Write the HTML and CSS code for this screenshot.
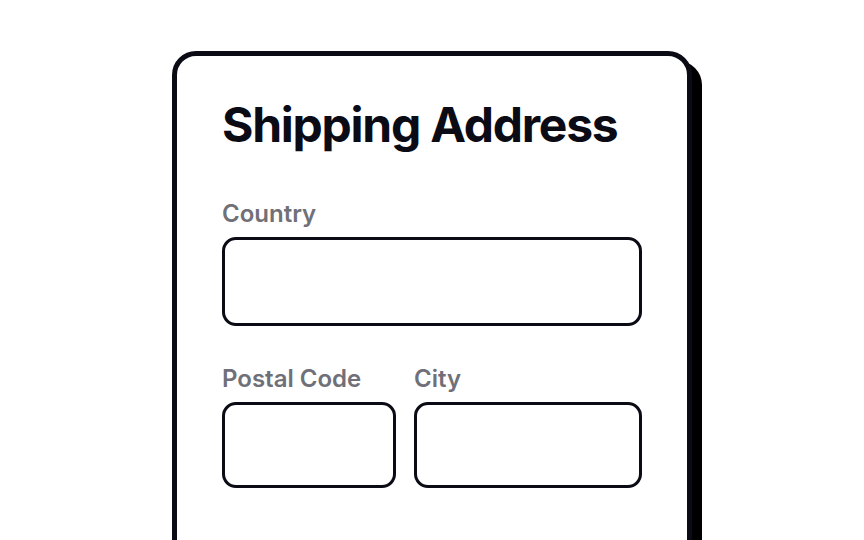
FILE: index.html
```html
<!DOCTYPE html>
<html>
<head>
<meta charset="utf-8">
<link rel="stylesheet" href="styles.css">
</head>
<body>
<div class="page">
  <form class="card">
    <h1 class="title">Shipping Address</h1>
    <div class="field">
      <label class="label">Country</label>
      <div class="input input-tall"></div>
    </div>
    <div class="row">
      <div class="field">
        <label class="label">Postal Code</label>
        <div class="input"></div>
      </div>
      <div class="field">
        <label class="label">City</label>
        <div class="input"></div>
      </div>
    </div>
  </form>
</div>
</body>
</html>
```

FILE: styles.css
```css
html, body {
  margin: 0;
  padding: 0;
  background: #ffffff;
  height: 540px;
  overflow: hidden;
}
.page {
  padding: 51px 0 0 172px;
}
.card {
  box-sizing: border-box;
  width: 520px;
  height: 600px;
  border: 5px solid #0b0b15;
  border-radius: 24px;
  box-shadow: 10px 10px 0 #000000;
  background: #ffffff;
  padding: 40px 45px 0 45px;
  font-family: Inter, "Noto Sans", sans-serif;
}
.title {
  margin: 0;
  font-size: 48px;
  line-height: 58px;
  font-weight: 700;
  color: #0b0b15;
  letter-spacing: -1.25px;
}
.field {
  display: flex;
  flex-direction: column;
  gap: 9px;
}
.card > .field {
  margin-top: 46px;
}
.label {
  font-size: 24px;
  line-height: 28px;
  font-weight: 600;
  color: #707078;
}
.input {
  box-sizing: border-box;
  height: 86px;
  border: 3px solid #0b0b15;
  border-radius: 14px;
  background: #fff;
}
.input-tall {
  height: 89px;
}
.row {
  margin-top: 39px;
  display: grid;
  grid-template-columns: 174px 1fr;
  gap: 18px;
}
```
